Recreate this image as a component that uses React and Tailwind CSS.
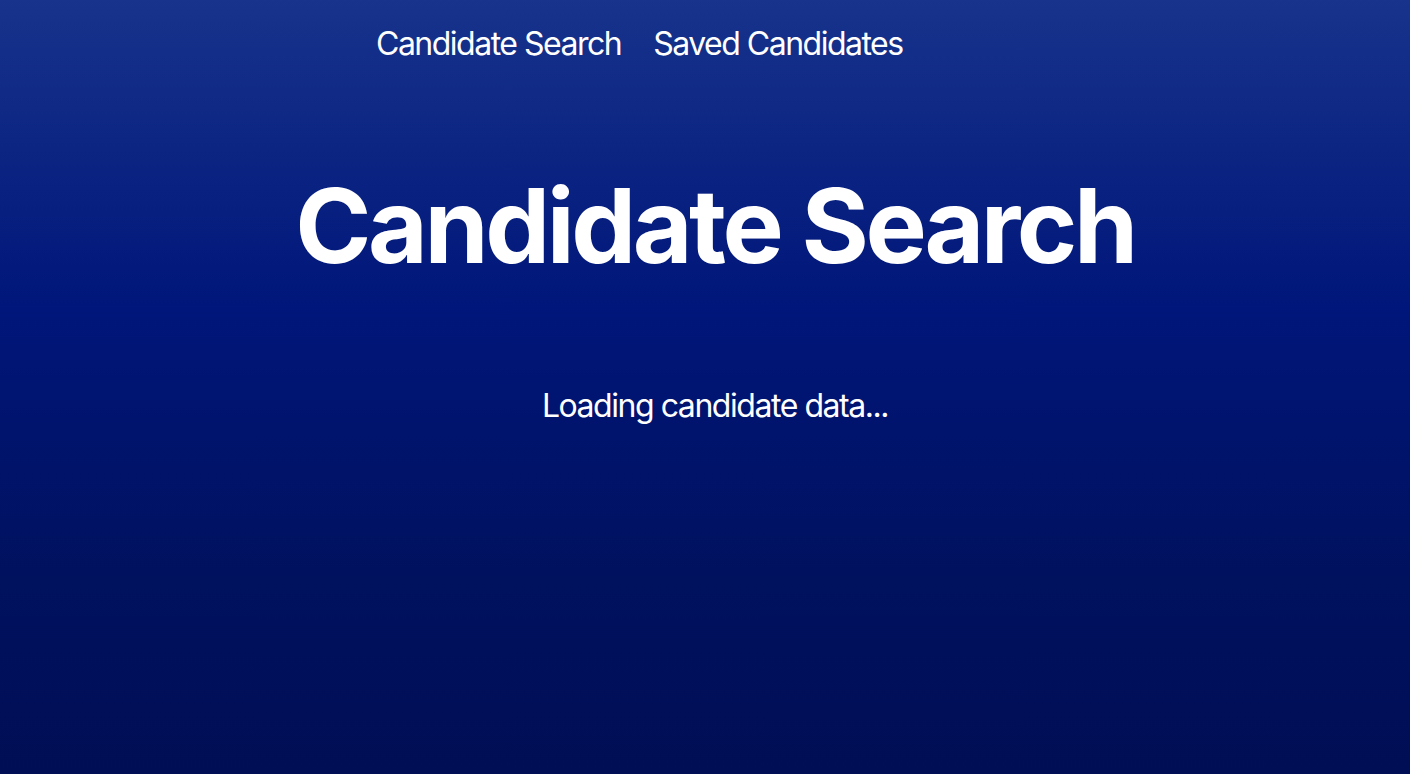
import React from 'react';

const App = () => {
  return (
    <div
      className="min-h-screen w-full bg-[linear-gradient(180deg,#17338b_0%,#00167a_40%,#00115e_75%,#000e55_100%)] text-white"
      style={{ fontFamily: 'Inter, "Noto Sans", sans-serif' }}
    >
      <nav className="flex gap-8 pl-[376px] pt-[20px]">
        <a className="text-[32px] leading-[48px] tracking-[-1.5px]">Candidate Search</a>
        <a className="text-[32px] leading-[48px] tracking-[-1.5px]">Saved Candidates</a>
      </nav>

      <main className="flex flex-col items-center pl-[20px]">
        <h1 className="mt-[96px] text-[103px] font-bold leading-[124px] tracking-[-3.4px]">Candidate Search</h1>
        <p className="mt-[94px] text-[32px] leading-[48px] tracking-[-1.45px]">Loading candidate data...</p>
      </main>
    </div>
  );
};

export default App;
